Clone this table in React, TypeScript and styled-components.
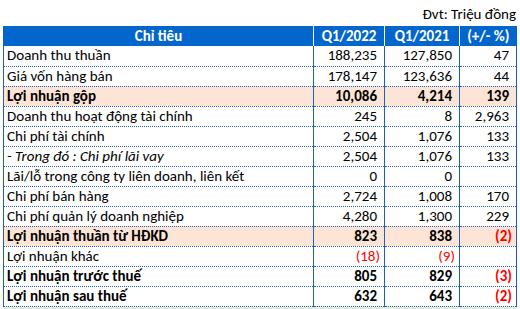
import React from "react";
import styled, { createGlobalStyle } from "styled-components";

type Row = {
  label: string;
  q22: string;
  q21: string;
  pct: string;
  bold?: boolean;
  italic?: boolean;
  highlight?: boolean;
};

const rows: Row[] = [
  { label: "Doanh thu thuần", q22: "188,235", q21: "127,850", pct: "47" },
  { label: "Giá vốn hàng bán", q22: "178,147", q21: "123,636", pct: "44" },
  { label: "Lợi nhuận gộp", q22: "10,086", q21: "4,214", pct: "139", bold: true, highlight: true },
  { label: "Doanh thu hoạt động tài chính", q22: "245", q21: "8", pct: "2,963" },
  { label: "Chi phí tài chính", q22: "2,504", q21: "1,076", pct: "133" },
  { label: "- Trong đó : Chi phí lãi vay", q22: "2,504", q21: "1,076", pct: "133", italic: true },
  { label: "Lãi/lỗ trong công ty liên doanh, liên kết", q22: "0", q21: "0", pct: "" },
  { label: "Chi phí bán hàng", q22: "2,724", q21: "1,008", pct: "170" },
  { label: "Chi phí quản lý doanh nghiệp", q22: "4,280", q21: "1,300", pct: "229" },
  { label: "Lợi nhuận thuần từ HĐKD", q22: "823", q21: "838", pct: "(2)", bold: true, highlight: true },
  { label: "Lợi nhuận khác", q22: "(18)", q21: "(9)", pct: "" },
  { label: "Lợi nhuận trước thuế", q22: "805", q21: "829", pct: "(3)", bold: true },
  { label: "Lợi nhuận sau thuế", q22: "632", q21: "643", pct: "(2)", bold: true },
];

const isNeg = (v: string) => v.startsWith("(");

export default function App() {
  return (
    <>
      <GlobalStyle />
      <Page>
        <Unit>Đvt: Triệu đồng</Unit>
        <Table>
          <colgroup>
            <col style={{ width: 310 }} />
            <col style={{ width: 71 }} />
            <col style={{ width: 75 }} />
            <col style={{ width: 57 }} />
          </colgroup>
          <thead>
            <tr>
              <Head>Chỉ tiêu</Head>
              <Head>Q1/2022</Head>
              <Head>Q1/2021</Head>
              <Head>(+/- %)</Head>
            </tr>
          </thead>
          <tbody>
            {rows.map((r) => (
              <BodyRow key={r.label} $highlight={r.highlight}>
                <Label $bold={r.bold} $italic={r.italic}>
                  {r.label}
                </Label>
                {[r.q22, r.q21, r.pct].map((v, i) => (
                  <Num key={i} $bold={r.bold} $neg={isNeg(v)}>
                    {v}
                  </Num>
                ))}
              </BodyRow>
            ))}
            <TailRow>
              <td />
              <td />
              <td />
              <td />
            </TailRow>
          </tbody>
        </Table>
      </Page>
    </>
  );
}

const GlobalStyle = createGlobalStyle`
  body {
    margin: 0;
    background: #ffffff;
    font-family: "Carlito", "Open Sans", "Liberation Sans", sans-serif;
    overflow: hidden;
  }
`;

const Page = styled.div`
  width: 520px;
  height: 309px;
  padding: 0 4px 0 3px;
  box-sizing: border-box;
  overflow: hidden;
`;

const Unit = styled.div`
  height: 26px;
  display: flex;
  align-items: flex-end;
  justify-content: flex-end;
  padding-bottom: 3px;
  box-sizing: border-box;
  font-size: 15px;
  color: #000;
`;

const Table = styled.table`
  border-collapse: collapse;
  table-layout: fixed;
  width: 513px;
  font-size: 15px;
  line-height: 19px;
`;

const Head = styled.th`
  height: 20px;
  padding: 0;
  background: #0366cc;
  color: #ffffff;
  font-weight: bold;
  text-align: center;
  border-left: 1px solid #ffffff;
  &:first-child {
    border-left: 1px solid #0366cc;
  }
`;

const BodyRow = styled.tr<{ $highlight?: boolean }>`
  height: 20px;
  background: ${(p) => (p.$highlight ? "#fce4d6" : "#ffffff")};

  td {
    border-bottom: 1px dotted #1f5fc0;
    border-left: 1px solid #1f5fc0;
    border-right: 1px solid #1f5fc0;
  }
`;

const TailRow = styled.tr`
  height: 20px;
  background: #e2efda;
`;

const Label = styled.td<{ $bold?: boolean; $italic?: boolean }>`
  padding: 0 0 0 3px;
  white-space: nowrap;
  color: #000;
  font-weight: ${(p) => (p.$bold ? "bold" : "normal")};
  font-style: ${(p) => (p.$italic ? "italic" : "normal")};
`;

const Num = styled.td<{ $bold?: boolean; $neg?: boolean }>`
  padding: 0 ${(p) => (p.$neg ? 4 : 7)}px 0 0;
  text-align: right;
  white-space: nowrap;
  color: ${(p) => (p.$neg ? "#ff0000" : "#000")};
  font-weight: ${(p) => (p.$bold ? "bold" : "normal")};
`;
